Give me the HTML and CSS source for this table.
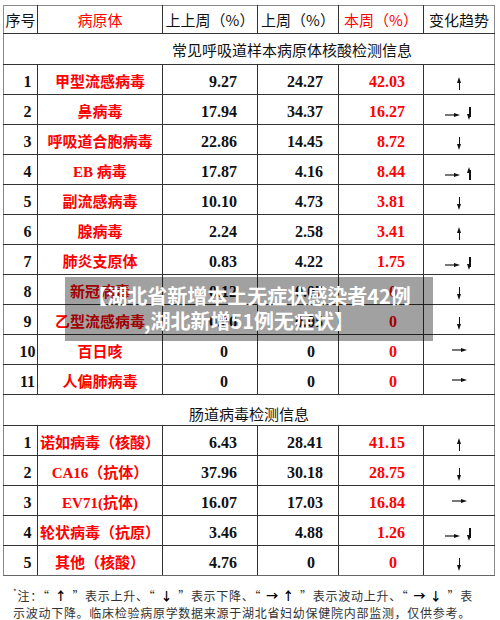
FILE: index.html
```html
<!DOCTYPE html>
<html lang="zh-CN">
<head>
<meta charset="utf-8">
<title>病原体检测信息</title>
<link rel="stylesheet" href="styles.css">
</head>
<body>
<div class="page">
  <table class="tbl">
    <colgroup>
      <col class="c1"><col class="c2"><col class="c3"><col class="c4"><col class="c5"><col class="c6">
    </colgroup>
    <thead>
      <tr class="head">
        <th>序号</th><th class="red">病原体</th><th>上上周（%）</th><th>上周（%）</th><th class="red">本周（%）</th><th>变化趋势</th>
      </tr>
    </thead>
    <tbody>
      <tr class="sec sec1"><td colspan="6">常见呼吸道样本病原体核酸检测信息</td></tr>
      <tr><td class="no">1</td><td class="name">甲型流感病毒</td><td class="n3">9.27</td><td class="n4">24.27</td><td class="n5">42.03</td><td class="tr"><span class="up"></span></td></tr>
      <tr><td class="no">2</td><td class="name">鼻病毒</td><td class="n3">17.94</td><td class="n4">34.37</td><td class="n5">16.27</td><td class="tr"><span class="rt"></span><span class="dn"></span></td></tr>
      <tr><td class="no">3</td><td class="name">呼吸道合胞病毒</td><td class="n3">22.86</td><td class="n4">14.45</td><td class="n5">8.72</td><td class="tr"><span class="dn"></span></td></tr>
      <tr><td class="no">4</td><td class="name">EB 病毒</td><td class="n3">17.87</td><td class="n4">4.16</td><td class="n5">8.44</td><td class="tr"><span class="rt"></span><span class="up"></span></td></tr>
      <tr><td class="no">5</td><td class="name">副流感病毒</td><td class="n3">10.10</td><td class="n4">4.73</td><td class="n5">3.81</td><td class="tr"><span class="dn"></span></td></tr>
      <tr><td class="no">6</td><td class="name">腺病毒</td><td class="n3">2.24</td><td class="n4">2.58</td><td class="n5">3.41</td><td class="tr"><span class="up"></span></td></tr>
      <tr><td class="no">7</td><td class="name">肺炎支原体</td><td class="n3">0.83</td><td class="n4">4.22</td><td class="n5">1.75</td><td class="tr"><span class="rt"></span><span class="dn"></span></td></tr>
      <tr><td class="no">8</td><td class="name">新冠病毒</td><td class="n3">0.12</td><td class="n4">0.07</td><td class="n5 z">0</td><td class="tr"><span class="dn"></span></td></tr>
      <tr><td class="no">9</td><td class="name">乙型流感病毒</td><td class="n3">0.06</td><td class="n4">0.05</td><td class="n5 z">0</td><td class="tr"><span class="dn"></span></td></tr>
      <tr><td class="no">10</td><td class="name">百日咳</td><td class="n3 z">0</td><td class="n4 z">0</td><td class="n5 z">0</td><td class="tr mid"><span class="rt"></span></td></tr>
      <tr><td class="no">11</td><td class="name">人偏肺病毒</td><td class="n3 z">0</td><td class="n4 z">0</td><td class="n5 z">0</td><td class="tr mid"><span class="rt"></span></td></tr>
      <tr class="sec sec2"><td colspan="6">肠道病毒检测信息</td></tr>
      <tr><td class="no">1</td><td class="name">诺如病毒（核酸）</td><td class="n3">6.43</td><td class="n4">28.41</td><td class="n5">41.15</td><td class="tr"><span class="up"></span></td></tr>
      <tr><td class="no">2</td><td class="name">CA16（抗体）</td><td class="n3">37.96</td><td class="n4">30.18</td><td class="n5">28.75</td><td class="tr"><span class="dn"></span></td></tr>
      <tr><td class="no">3</td><td class="name">EV71(抗体)</td><td class="n3">16.07</td><td class="n4">17.03</td><td class="n5">16.84</td><td class="tr mid"><span class="rt"></span></td></tr>
      <tr><td class="no">4</td><td class="name">轮状病毒（抗原）</td><td class="n3">3.46</td><td class="n4">4.88</td><td class="n5">1.26</td><td class="tr"><span class="rt"></span><span class="dn"></span></td></tr>
      <tr><td class="no">5</td><td class="name">其他（核酸）</td><td class="n3">4.76</td><td class="n4 z">0</td><td class="n5 z">0</td><td class="tr"><span class="dn"></span></td></tr>
    </tbody>
  </table>

  <div class="note">
    <p><sup class="star">*</sup>注：“<b>↑</b>”表示上升、“<b>↓</b>”表示下降、“<b>→ ↑</b>”表示波动上升、“<b>→ ↓</b>”表</p>
    <p>示波动下降。临床检验病原学数据来源于湖北省妇幼保健院内部监测，仅供参考。</p>
  </div>

  <div class="overlay">
    <p>【湖北省新增本土无症状感染者42例</p>
    <p>,湖北新增51例无症状】</p>
  </div>
</div>
</body>
</html>
```

FILE: styles.css
```css
* { box-sizing: border-box; }
html, body { margin: 0; padding: 0; background: #fff; }
body {
  font-family: "Liberation Serif", "Noto Sans CJK SC", serif;
  color: #111;
}
.page {
  position: relative;
  width: 500px;
  height: 620px;
  padding: 5px 6px 0 3px;
  overflow: hidden;
}

/* table */
.tbl {
  border-collapse: collapse;
  table-layout: fixed;
  width: 491px;
}
.c1 { width: 34px; }
.c2 { width: 125px; }
.c3 { width: 95px; }
.c4 { width: 81px; }
.c5 { width: 85px; }
.c6 { width: 71px; }

.tbl th, .tbl td {
  border: 1px solid #333;
  padding: 0;
  overflow: hidden;
  white-space: nowrap;
}
.tbl tr > :first-child { border-left-color: #8a8a8a; }
.tbl tr > :last-child { border-right-color: #8a8a8a; }
.tbl thead th { border-top-color: #8a8a8a; }
.tbl tbody tr:last-child td { border-bottom-color: #666; }

.head th {
  height: 28px;
  font-family: "Noto Sans CJK SC", sans-serif;
  font-weight: 400;
  font-size: 15px;
  line-height: 18px;
  text-align: center;
  vertical-align: middle;
  color: #111;
}
.red { color: #ff0000 !important; }

.tbl tbody td {
  height: 30px;
  vertical-align: bottom;
  padding-bottom: 3px;
  line-height: 18px;
}

.tbl .sec td {
  font-family: "Noto Sans CJK SC", sans-serif;
  font-size: 15px;
  font-weight: 400;
  color: #111;
  text-align: center;
}
.tbl .sec1 td {
  height: 31px;
  padding-left: 86px;
  vertical-align: middle;
  padding-bottom: 0;
  padding-top: 2px;
}
.tbl .sec2 td {
  height: 31px;
  padding-bottom: 2px;
}

.tbl .no {
  font-weight: 700;
  font-size: 16px;
  text-align: center;
  padding-left: 14px;
}
.tbl .name {
  font-weight: 700;
  font-size: 15px;
  color: #ff0000;
  text-align: center;
}
.tbl .n3, .tbl .n4, .tbl .n5 {
  font-weight: 700;
  font-size: 16px;
  text-align: right;
}
.tbl .n3 { padding-right: 20px; }
.tbl .n4 { padding-right: 15px; }
.tbl .n5 { padding-right: 18px; color: #ff0000; }
.tbl .n3.z { padding-right: 29px; }
.tbl .n4.z { padding-right: 23px; }
.tbl .n5.z { padding-right: 26px; }

/* trend arrows */
.tbl .tr {
  text-align: center;
  font-size: 0;
  padding-bottom: 4px;
}
.tbl .tr.mid {
  vertical-align: middle;
  padding-bottom: 2px;
}
.up, .dn, .rt {
  display: inline-block;
  position: relative;
  vertical-align: bottom;
}
.up, .dn {
  width: 7px;
  height: 13px;
}
.up::before, .dn::before {
  content: "";
  position: absolute;
  left: 3px;
  width: 1.5px;
  background: #111;
}
.up::before { top: 3px; bottom: 0; }
.dn::before { top: 0; bottom: 3px; }
.up::after, .dn::after {
  content: "";
  position: absolute;
  left: 1px;
  border-left: 2.75px solid transparent;
  border-right: 2.75px solid transparent;
}
.up::after { top: 0; border-bottom: 6px solid #111; }
.dn::after { bottom: 0; border-top: 6px solid #111; }

.rt {
  width: 15px;
  height: 13px;
  margin-right: 6px;
}
.tr .rt:only-child { margin-right: 0; }
.rt::before {
  content: "";
  position: absolute;
  left: 0;
  right: 5px;
  top: 7px;
  height: 1.5px;
  background: #777;
}
.rt::after {
  content: "";
  position: absolute;
  right: 0;
  top: 5.5px;
  border-top: 2.25px solid transparent;
  border-bottom: 2.25px solid transparent;
  border-left: 6px solid #111;
}
.tr.mid .rt { vertical-align: middle; }

/* note */
.note {
  margin-top: 11px;
  padding-left: 10px;
  font-family: "Noto Sans CJK SC", sans-serif;
  font-size: 12px;
  line-height: 17px;
  letter-spacing: 0.72px;
  color: #333;
}
.note p { margin: 0; white-space: nowrap; }
.note b { color: #000; font-weight: 700; margin: 0 5px; }
.star { font-size: 8px; vertical-align: top; line-height: 10px; }

/* overlay */
.overlay {
  position: absolute;
  left: 65px;
  top: 277px;
  width: 368px;
  height: 64px;
  background: rgba(0, 0, 0, 0.37);
  padding-top: 6px;
  text-align: center;
  font-family: "Noto Sans CJK SC", sans-serif;
  font-weight: 700;
  font-size: 20px;
  line-height: 25px;
  color: #fff;
}
.overlay p { margin: 0; white-space: nowrap; }
```
